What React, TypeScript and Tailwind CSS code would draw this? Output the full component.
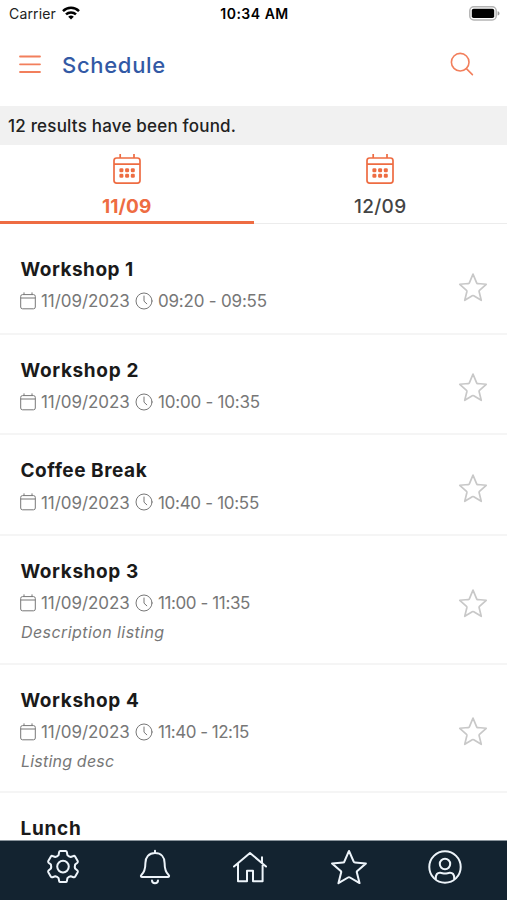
// Conference schedule screen: day tabs, the session list and the bottom
// navigation bar.

import type { ReactNode } from 'react';
import clsx from 'clsx';

type Session = {
  title: string;
  titleClass: string;
  time?: string;
  timeClass?: string;
  description?: string;
  descriptionClass?: string;
};

const SESSIONS: Session[] = [
  { title: 'Workshop 1', titleClass: 'tracking-[0.5px]', time: '09:20 - 09:55', timeClass: 'tracking-[-0.2px]' },
  { title: 'Workshop 2', titleClass: 'tracking-[0.65px]', time: '10:00 - 10:35', timeClass: 'tracking-[-0.22px]' },
  { title: 'Coffee Break', titleClass: 'tracking-[0.55px]', time: '10:40 - 10:55', timeClass: 'tracking-[-0.3px]' },
  {
    title: 'Workshop 3',
    titleClass: 'tracking-[0.6px]',
    time: '11:00 - 11:35',
    timeClass: 'tracking-[-0.4px]',
    description: 'Description listing',
    descriptionClass: 'tracking-[0.42px]',
  },
  {
    title: 'Workshop 4',
    titleClass: 'tracking-[0.6px]',
    time: '11:40 - 12:15',
    timeClass: 'tracking-[-0.5px]',
    description: 'Listing desc',
    descriptionClass: 'tracking-[0.2px]',
  },
  // only the heading clears the navigation bar
  { title: 'Lunch', titleClass: 'tracking-[0.7px]' },
];

const STAR_PATH =
  'M16 2.2 19.9 11.6c.2.5.6.7 1 .7l9.2.8-7.2 6.5c-.3.3-.5.8-.4 1.2l2.3 9.4-8-4.9c-.5-.3-1.1-.3-1.6 0l-8 4.9 2.3-9.4c.1-.5-.1-.9-.4-1.2L1.9 13.1l9.2-.8c.5 0 .9-.3 1-.7z';

function StarIcon({ className, strokeWidth }: { className: string; strokeWidth: number }) {
  return (
    <svg viewBox="0 0 32 32" className={className} fill="none" stroke="currentColor" strokeWidth={strokeWidth} strokeLinejoin="round">
      <path d={STAR_PATH} />
    </svg>
  );
}

function TabCalendarIcon() {
  return (
    <svg viewBox="0 0 28 32" className="h-8 w-7" fill="none" stroke="currentColor" strokeWidth="1.7">
      <rect x="1" y="5" width="26" height="25.2" rx="2.6" />
      <path d="M1 11.2h26M7.2 5V1M21 5V1" />
      <g fill="currentColor" stroke="none">
        <rect x="6.4" y="15.2" width="4" height="4" rx="1.3" />
        <rect x="12.1" y="15.2" width="4" height="4" rx="1.3" />
        <rect x="17.8" y="15.2" width="4" height="4" rx="1.3" />
        <rect x="6.4" y="20.8" width="4" height="4" rx="1.3" />
        <rect x="12.1" y="20.8" width="4" height="4" rx="1.3" />
        <rect x="17.8" y="20.8" width="4" height="4" rx="1.3" />
      </g>
    </svg>
  );
}

function StatusBar() {
  return (
    <div className="grid h-7 grid-cols-3 items-center pr-[7px] pb-px pl-[9px] text-black">
      <div className="flex items-center gap-[6px]">
        <span className="text-[14px] tracking-[0.15px] text-[#222]">Carrier</span>
        <svg viewBox="0 0 18 14" className="-mt-[1px] h-[14px] w-[18px]" fill="none" stroke="currentColor" strokeWidth="2.5">
          <path d="M1 5.1a11.4 11.4 0 0 1 16 0" />
          <path d="M4 8.4a7.2 7.2 0 0 1 10 0" />
          <path d="M9 13.6 6.2 10.8a4 4 0 0 1 5.6 0z" fill="currentColor" stroke="none" />
        </svg>
      </div>
      <div className="text-center text-[14px] font-semibold tracking-[0.5px] whitespace-nowrap">10:34 AM</div>
      <svg viewBox="0 0 31 15" className="-mt-[1px] h-[15px] w-[31px] justify-self-end">
        <rect x="0.8" y="0.8" width="26.4" height="13.2" rx="4" fill="#fff" stroke="#b4b4b4" strokeWidth="1.5" />
        <rect x="2.8" y="2.8" width="22.4" height="9.2" rx="1.8" />
        <path d="M28.6 5.2c1.2.4 1.9 1.2 1.9 2.2s-.7 1.8-1.9 2.2z" fill="#999" />
      </svg>
    </div>
  );
}

function Header() {
  return (
    <header className="flex h-[78px] items-center pr-[33px] pb-[4px] pl-[19px]">
      <svg viewBox="0 0 22 19" className="-mt-[2px] h-[19px] w-[22px] text-[#f27f5c]" stroke="currentColor" strokeWidth="1.8" strokeLinecap="round">
        <path d="M1 1.5h20M1 9.3h20M1 17h20" />
      </svg>
      <h1 className="mt-[1px] ml-[21px] text-[22px] font-medium tracking-[0.7px] text-[#3259a5]">Schedule</h1>
      <svg viewBox="0 0 24 24" className="-mt-[3px] ml-auto h-6 w-6 text-[#f27f5c]" fill="none" stroke="currentColor" strokeWidth="1.6" strokeLinecap="round">
        <circle cx="10.2" cy="10.2" r="8.8" />
        <path d="m16.4 16.6 6 6" />
      </svg>
    </header>
  );
}

function DayTab({ label, active }: { label: string; active?: boolean }) {
  return (
    <button
      type="button"
      className={clsx(
        'flex flex-1 flex-col items-center border-[#ececec] pt-[8px] text-[#ee6c42]',
        active ? 'border-b-[3px] border-b-[#ee6c42]' : 'border-b'
      )}
    >
      <TabCalendarIcon />
      <span
        className={clsx(
          'mt-[10px] text-[19px] leading-6',
          active ? 'font-bold tracking-[0.1px]' : 'font-medium tracking-[0.3px] text-[#444]'
        )}
      >
        {label}
      </span>
    </button>
  );
}

function SessionRow({ session }: { session: Session }) {
  return (
    <li className="flex items-center justify-between border-b-2 border-[#f5f5f5] pt-[24px] pr-[19px] pb-[18.7px] pl-[20px]">
      <div className="flex flex-col">
        <h2 className={clsx('pl-[0.5px] text-[19px] leading-6 font-bold text-[#1a1a1a]', session.titleClass)}>
          {session.title}
        </h2>
        {session.time && (
          <div className="mt-2 flex h-6 items-center text-[17px] text-[#777]">
            <svg viewBox="0 0 16 18" className="-mt-[2px] h-[18px] w-4" fill="none" stroke="currentColor">
              <rect x="0.7" y="2.6" width="14.6" height="14.2" rx="1.8" />
              <path d="M0.7 6h14.6M4 2.6V.4M12 2.6V.4" />
            </svg>
            <span className="ml-[5px] w-[89px] tracking-[-0.05px] whitespace-nowrap">11/09/2023</span>
            <svg viewBox="0 0 18 18" className="-mt-[2px] ml-[5px] h-[18px] w-[18px]" fill="none" stroke="currentColor" strokeLinecap="round">
              <circle cx="9" cy="9" r="8" />
              <path d="M9 4v5.2l2.8 2.6" />
            </svg>
            <span className={clsx('ml-[5px] whitespace-nowrap', session.timeClass)}>{session.time}</span>
          </div>
        )}
        {session.description && (
          <p className={clsx('mt-[4px] pl-[1px] text-[16px] leading-6 text-[#777] italic', session.descriptionClass)}>
            {session.description}
          </p>
        )}
      </div>
      {session.time && <StarIcon className="mt-[1px] h-[30px] w-[30px] text-[#c8c8c8]" strokeWidth={1.8} />}
    </li>
  );
}

function NavButton({ label, className, children }: { label: string; className?: string; children: ReactNode }) {
  return (
    <button type="button" aria-label={label} className={className}>
      <svg viewBox="0 0 36 36" className="h-9 w-9" fill="none" stroke="currentColor" strokeWidth="2" strokeLinecap="round" strokeLinejoin="round">
        {children}
      </svg>
    </button>
  );
}

function BottomNav() {
  return (
    <nav className="flex h-[60px] shrink-0 items-start border-t border-[#8a949c] bg-[#132330] pt-[8px] pl-[45px] text-[#edf4fa]">
      <NavButton label="Settings">
        <g transform="translate(18 17.6)">
          <path d="M-4.4-11.5-3.9-14.4Q-3.7-15.5-2.6-15.5H2.6Q3.7-15.5 3.9-14.4L4.4-11.5Q5.8-10 7.7-9.6L10.5-10.6Q11.5-11 12.1-10.1L14.7-5.6Q15.2-4.6 14.4-3.9L12.1-2Q11.5 0 12.1 2L14.4 3.9Q15.2 4.6 14.7 5.6L12.1 10.1Q11.5 11 10.5 10.6L7.7 9.6Q5.8 10 4.4 11.5L3.9 14.4Q3.7 15.5 2.6 15.5H-2.6Q-3.7 15.5-3.9 14.4L-4.4 11.5Q-5.8 10-7.7 9.6L-10.5 10.6Q-11.5 11-12.1 10.1L-14.7 5.6Q-15.2 4.6-14.4 3.9L-12.1 2Q-11.5 0-12.1-2L-14.4-3.9Q-15.2-4.6-14.7-5.6L-12.1-10.1Q-11.5-11-10.5-10.6L-7.7-9.6Q-5.8-10-4.4-11.5Z" />
          <circle r="5.8" />
        </g>
      </NavButton>
      <NavButton label="Notifications" className="ml-[56px]">
        <path d="M18 1.8v2M18 4c-6.2 0-9.6 4.2-9.6 10 0 7-1.6 9.8-4 12-1 .9-.5 2.1.8 2.1h25.6c1.3 0 1.8-1.2.8-2.1-2.4-2.2-4-5-4-12 0-5.8-3.4-10-9.6-10z" />
        <path d="M15 31.6c.2 3.4 5.8 3.4 6 0" />
      </NavButton>
      <NavButton label="Home" className="ml-[59px]">
        <path d="M2 17.5 18 4l16 13.5M6 14.5v17.8h9V21.7h6v10.6h9.6V14.5M30 14V8.2" />
      </NavButton>
      <NavButton label="Favourites" className="ml-[63px]">
        <g transform="translate(-1.2 -.6) scale(1.2 1.15)" strokeWidth="1.7">
          <path d={STAR_PATH} />
        </g>
      </NavButton>
      <NavButton label="Profile" className="ml-[60px]">
        <circle cx="18" cy="18" r="15.7" />
        <circle cx="18" cy="15" r="5.2" />
        <path d="M8.8 30c-.4-4.8 1.8-6.4 4.5-6.2 2 .2 2.9.7 4.7.7s2.7-.5 4.7-.7c2.7-.2 4.9 1.4 4.5 6.2" />
      </NavButton>
    </nav>
  );
}

export default function App() {
  return (
    <div className="flex h-[900px] w-full flex-col overflow-hidden bg-white font-['Inter',sans-serif]">
      <StatusBar />
      <Header />
      <div className="flex h-[39px] shrink-0 items-center bg-[#f1f1f1] pt-[2px] pl-2 text-[17px] font-medium tracking-[0.2px] text-[#222]">
        12 results have been found.
      </div>
      <div className="flex h-[79px] shrink-0">
        <DayTab label="11/09" active />
        <DayTab label="12/09" />
      </div>
      <ul className="min-h-0 flex-1 overflow-hidden pt-[10px]">
        {SESSIONS.map((session) => (
          <SessionRow key={session.title} session={session} />
        ))}
      </ul>
      <BottomNav />
    </div>
  );
}
